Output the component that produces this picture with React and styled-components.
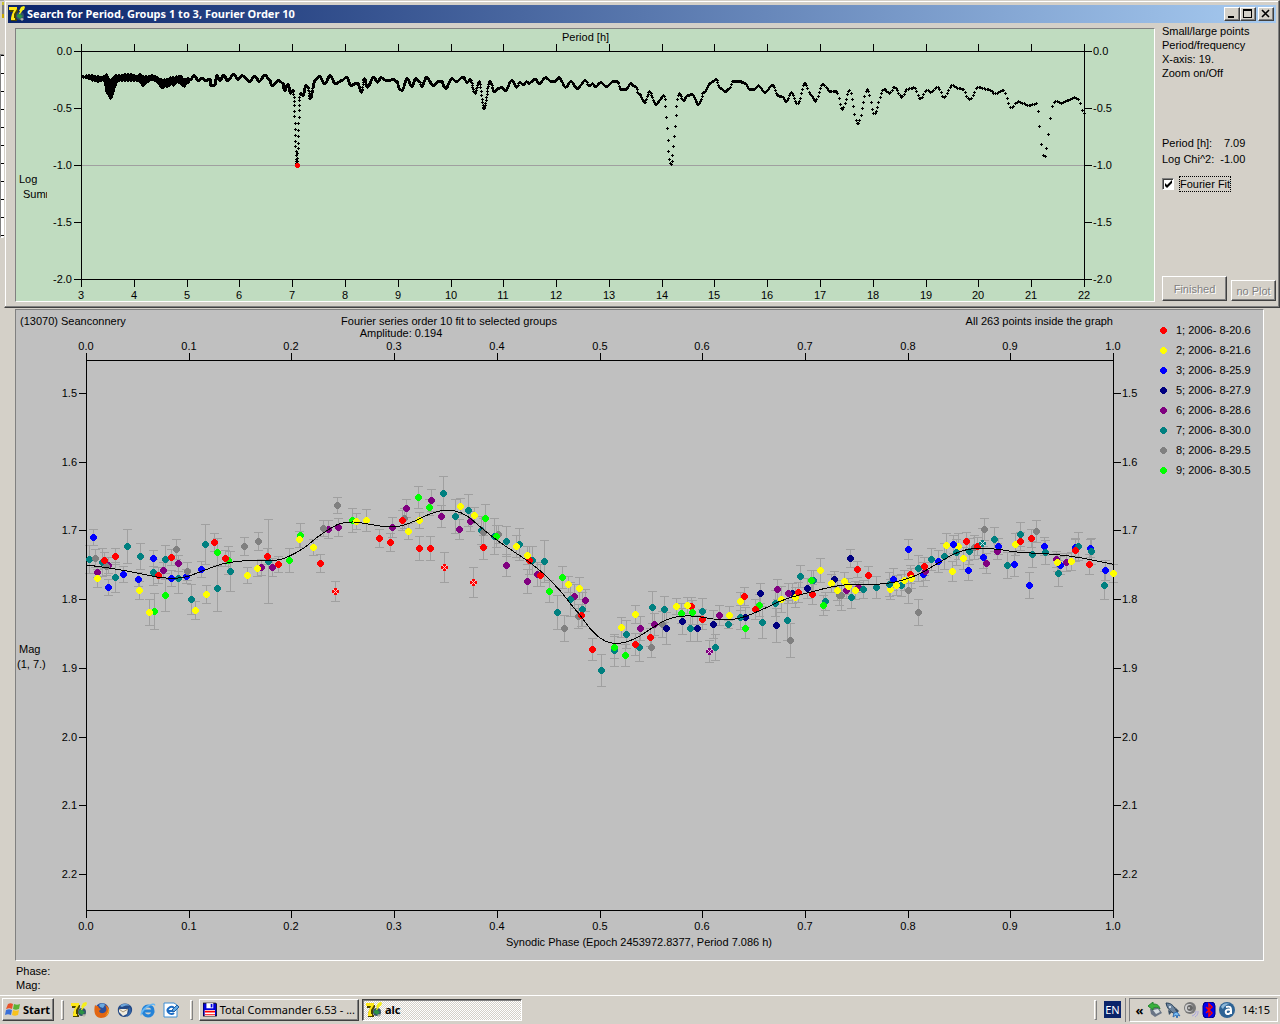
import React, { useState } from "react";
import styled, { createGlobalStyle, css } from "styled-components";

const GlobalStyle = createGlobalStyle`
  * {
    box-sizing: border-box;
  }
  body {
    margin: 0;
    background: #d4d0c8;
    color: #000;
    font-family: "Liberation Sans", Arial, sans-serif;
    font-size: 11px;
    line-height: 14px;
  }
  button,
  input {
    font: inherit;
    color: inherit;
    margin: 0;
  }
`;

const tahoma = `"Noto Sans", Tahoma, sans-serif`;

const raised = css`
  border: 1px solid;
  border-color: #fff #404040 #404040 #fff;
  box-shadow: inset -1px -1px 0 #808080;
`;

const Screen = styled.div`
  min-height: 100vh;
  display: flex;
  flex-direction: column;
`;
const TopArea = styled.div`
  display: grid;
  grid-template-columns: 4px minmax(0, 1fr);
`;
const Strip = styled.div`
  padding-top: 1px;
  border-top: 1px solid #a0a0a0;
`;
const StripIcon = styled.div`
  height: 16px;
  margin-left: 2px;
  margin-bottom: 36px;
  background: linear-gradient(#c8c030 3px, #808080 3px, #808080 12px, #c8a800 12px);
`;
const StripPlot = styled.div`
  height: 184px;
  border: 1px solid;
  border-color: #808080 transparent #fff #808080;
  background: repeating-linear-gradient(#000 0 1px, #fff 1px 18px);
`;
const Dialog = styled.section`
  border: 1px solid;
  border-color: #d4d0c8 #404040 #404040 #d4d0c8;
  box-shadow: inset -1px -1px 0 #808080, inset 1px 1px 0 #fff;
  padding: 4px 3px 5px;
`;
const TitleBar = styled.header`
  height: 18px;
  padding: 0 2px 0 1px;
  display: flex;
  align-items: center;
  color: #fff;
  background: linear-gradient(to right, #0a246a, #a6caf0);
`;
const Title = styled.h1`
  flex: 1;
  margin: 0 0 0 2px;
  font: bold 11px/16px ${tahoma};
`;
const CaptionButton = styled.button`
  width: 16px;
  height: 14px;
  padding: 0;
  margin-left: ${(p) => (p.$gap ? 2 : 0)}px;
  display: flex;
  background: #d4d0c8;
  ${raised}
`;
const DialogBody = styled.div`
  display: grid;
  grid-template-columns: minmax(0, 1fr) 114px;
  column-gap: 7px;
  padding: 5px 0 0 7px;
`;
const Sunken = styled.div`
  border: 1px solid;
  border-color: #808080 #fff #fff #808080;
  background: ${(p) => p.$color};
`;
const Chart = styled.svg`
  display: block;
  width: 100%;
  height: auto;
  font-size: 11px;
  shape-rendering: crispEdges;
`;
const Side = styled.aside`
  display: flex;
  flex-direction: column;
  margin-top: -4px;
  padding-bottom: 1px;
`;
const Options = styled.ul`
  list-style: none;
  margin: 0;
  padding: 0;
`;
const Values = styled.dl`
  display: grid;
  grid-template-columns: auto auto;
  justify-content: start;
  column-gap: 6px;
  row-gap: 2px;
  margin: 56px 0 0;
  white-space: nowrap;
  dd {
    margin: 0;
    text-align: right;
  }
`;
const CheckLabel = styled.label`
  display: flex;
  align-items: center;
  gap: 5px;
  margin-top: 10px;
`;
const CheckBox = styled.span`
  display: grid;
  > * {
    grid-area: 1 / 1;
  }
  svg {
    pointer-events: none;
  }
`;
const CheckInput = styled.input`
  appearance: none;
  width: 12px;
  height: 12px;
  background: #fff;
  border: 1px solid;
  border-color: #808080 #fff #fff #808080;
  box-shadow: inset 1px 1px 0 #404040;
`;
const CheckText = styled.span`
  border: 1px dotted #000;
`;
const Buttons = styled.div`
  display: flex;
  align-items: flex-end;
  gap: 4px;
  margin-top: auto;
`;
const PushButton = styled.button`
  width: ${(p) => p.$width}px;
  height: ${(p) => p.$height}px;
  padding: 0;
  background: #d4d0c8;
  white-space: nowrap;
  ${raised}
  &:disabled {
    color: #808080;
    text-shadow: 1px 1px 0 #fff;
  }
`;
const Main = styled.main`
  padding: 1px 16px 0 15px;
`;
const Status = styled.footer`
  padding: 3px 16px 0;
`;
const Taskbar = styled.nav`
  display: flex;
  align-items: center;
  height: 29px;
  margin-top: auto;
  padding: 0 2px 1px;
  border-top: 1px solid #fff;
  font: 11px/16px ${tahoma};
`;
const StartButton = styled.button`
  width: 52px;
  height: 23px;
  padding: 0 0 0 2px;
  display: flex;
  align-items: center;
  gap: 2px;
  font: bold 11px/16px ${tahoma};
  background: #d4d0c8;
  ${raised}
`;
const Grip = styled.span`
  width: 3px;
  height: 20px;
  margin: 0 6px 0 7px;
  border: 1px solid;
  border-color: #fff #808080 #808080 #fff;
`;
const QuickLaunch = styled.div`
  display: flex;
  gap: 7px;
  margin: 0 4px 0 1px;
`;
const IconButton = styled.button`
  width: 16px;
  height: 16px;
  padding: 0;
  border: 0;
  background: none;
  svg {
    display: block;
  }
`;
const TaskButton = styled.button`
  width: 160px;
  height: 22px;
  margin-right: 3px;
  padding: 0 3px;
  display: flex;
  align-items: center;
  gap: 3px;
  white-space: nowrap;
  background: #d4d0c8;
  ${raised}
  ${(p) =>
    p.$active &&
    css`
      font-weight: bold;
      border-color: #404040 #fff #fff #404040;
      box-shadow: inset 1px 1px 0 #808080;
      background: repeating-conic-gradient(#fff 0 25%, #d4d0c8 0 50%) 0 0 / 2px 2px;
    `}
`;
const Spacer = styled.div`
  flex: 1;
`;
const Language = styled.button`
  width: 17px;
  height: 17px;
  padding: 0;
  border: 0;
  margin-left: 1px;
  color: #fff;
  background: #0a246a;
`;
const Divider = styled.span`
  width: 1px;
  height: 24px;
  margin: 0 3px 0 4px;
  background: #808080;
`;
const Tray = styled.div`
  display: flex;
  align-items: center;
  gap: 2px;
  height: 24px;
  padding: 0 7px 0 4px;
  border: 1px solid;
  border-color: #808080 #fff #fff #808080;
`;
const Clock = styled.time`
  margin-left: 5px;
`;
const More = styled.button`
  width: 11px;
  padding: 0;
  border: 0;
  background: none;
  font: bold 13px/16px ${tahoma};
`;

const COLORS = {
  r: "#ff0000",
  y: "#ffff00",
  b: "#0000ff",
  n: "#000080",
  p: "#800080",
  t: "#008080",
  g: "#808080",
  l: "#00ff00",
};

const LEGEND = [
  ["r", "1; 2006- 8-20.6"],
  ["y", "2; 2006- 8-21.6"],
  ["b", "3; 2006- 8-25.9"],
  ["n", "5; 2006- 8-27.9"],
  ["p", "6; 2006- 8-28.6"],
  ["t", "7; 2006- 8-30.0"],
  ["g", "8; 2006- 8-29.5"],
  ["l", "9; 2006- 8-30.5"],
];

// Each segment has its own origin; offsets inside are in thirds of a unit.
const unpack = (ox, oy, text) =>
  text.split(",").map((item) => {
    const [x, y, ...rest] = item.trim().split(" ").map(Number);
    return [ox + x / 3, oy + y / 3, ...rest];
  });

// x, top, bottom of the dense short period part
const BAND = [
  [244, 228, 230], [260, 226, 234], [275, 226, 240], [290, 228, 244],
  [300, 230, 242], [312, 228, 242], [318, 222, 275], [324, 236, 285],
  [332, 240, 298], [340, 228, 270], [350, 224, 240], [365, 224, 242],
  [380, 222, 240], [395, 222, 243], [410, 228, 242], [418, 222, 245],
  [428, 228, 258], [440, 228, 245], [458, 225, 238], [470, 232, 245],
  [480, 236, 260], [487, 240, 266], [495, 236, 256], [503, 236, 262],
  [512, 230, 250], [520, 232, 256], [530, 228, 245], [541, 226, 250],
  [550, 238, 262], [558, 236, 250], [570, 232, 244],
];

// turning points of the periodogram
const TURNS = [
  ...unpack(0, 0, "570 238,583 226,595 240,605 233,618 240,630 236,633 255,643 256,651 226,660 240,671 224,683 240,701 222,714 236,727 226,748 242,765 228,778 242,795 224,808 236,816 256,836 240,848 248,854 270,864 252,872 278,880 270,891 490,901 278,909 286,918 256,925 262,931 295,945 240,958 228,975 250,990 226,1007 250,1025 240,1040 230,1053 254,1073 248,1085 276,1093 234,1102 260,1121 230,1133 245,1143 232,1160 240,1180 238,1190 242,1199 266"),
  ...unpack(400, 20, "5 210,22 174,35 198,47 174,58 182,66 198,79 170,100 196,115 184,125 184,137 204,156 174,168 184,189 170,202 186,211 178,225 218,238 184,252 264,270 184,284 214,295 204,306 200,316 210,335 180,350 200,359 186,370 192,380 184,388 188,405 176,418 188,437 172,453 182,465 182,477 172,497 200,513 182,532 204,556 180,568 196,578 190,587 198,602 186,620 198,640 184,653 184,663 206,678 206,692 190,706 198,718 222,734 246,750 214,767 252,792 226,813 432,838 220,851 240,862 226,876 222,896 252,912 216,930 188,948 178,962 204,975 214,988 206,1000 182,1018 182,1035 188,1052 208,1062 208,1076 196,1095 216,1118 194,1136 226,1146 228,1158 244,1175 216,1192 248"),
  ...unpack(780, 0, "5 286,19 304,35 278,53 308,76 248,93 285,107 302,128 252,153 274,170 272,187 328,209 270,233 370,263 268,283 340,312 266,328 278,344 260,366 290,383 266,403 262,421 296,440 270,453 276,473 260,492 290,517 254,535 264,548 266,569 298,595 260,625 268,648 280,670 270,694 322,715 304,730 310,750 316,768 310,793 472,822 306,832 302,847 308,865 300,885 292,895 298,912 340"),
];

const periodX = (period) => 81 + (period - 3) * 52.79;

const levelAt = (x) => {
  const i = TURNS.findIndex((p) => p[0] >= x);
  if (i < 1) return TURNS[i === 0 ? 0 : TURNS.length - 1][1];
  const [x0, y0] = TURNS[i - 1];
  const [x1, y1] = TURNS[i];
  const t = (x - x0) / (x1 - x0);
  return y0 + ((y1 - y0) * (1 - Math.cos(Math.PI * t))) / 2;
};

const cross = (x, y) => `M${x - 1} ${y}h3v1h-3zM${x} ${y - 1}h1v3h-1z`;

const buildPeriodogram = () => {
  let d = "";
  // trial periods are spaced evenly in frequency
  for (let f = 1 / 22; f < 1 / 5.06; f += 0.000075) {
    const x = periodX(1 / f);
    d += cross(Math.floor(x), Math.round(levelAt(x)));
  }
  for (let i = 0; i < BAND.length - 1; i++) {
    const [x0, top0, bottom0] = BAND[i];
    const [x1, top1, bottom1] = BAND[i + 1];
    for (let x = Math.ceil(x0 / 3); x < x1 / 3; x++) {
      const t = (x * 3 - x0) / (x1 - x0);
      const wave = x % 3 === 0 ? 3 : 0;
      const top = (top0 + (top1 - top0) * t + wave) / 3;
      const bottom = (bottom0 + (bottom1 - bottom0) * t - wave) / 3;
      for (let y = Math.round(top); y <= bottom; y++) d += cross(x, y);
    }
  }
  return d;
};

const PERIODOGRAM = buildPeriodogram();

const CURVE = [
  ...unpack(70, 470, "50 285,110 293,165 302,215 312,262 321,310 325,350 320,400 302,460 281,530 272,610 272,650 262,700 235,740 203"),
  ...unpack(320, 470, "30 176,60 161,100 156,150 163,190 169,235 169,280 155,325 134,370 121,405 123,440 137,480 170,530 210,580 244,630 278,675 315,720 362,760 412"),
  ...unpack(560, 560, "60 165,90 205,120 234,150 248,180 250,225 236,275 205,320 179,360 169,410 169,460 177,520 178,560 168,610 147,660 124,700 110,750 97,800 84"),
  ...unpack(820, 500, "57 257,95 253,150 254,200 250,250 240,300 221,350 192,400 163,440 149,490 145,540 149,600 157,700 163,780 173,880 193"),
];

const smoothPath = (pts) => {
  let d = `M${pts[0][0]} ${pts[0][1]}`;
  for (let i = 0; i < pts.length - 1; i++) {
    const a = pts[i - 1] || pts[i];
    const b = pts[i];
    const c = pts[i + 1];
    const e = pts[i + 2] || c;
    d += `C${b[0] + (c[0] - a[0]) / 6} ${b[1] + (c[1] - a[1]) / 6} ${c[0] - (e[0] - b[0]) / 6} ${c[1] - (e[1] - b[1]) / 6} ${c[0]} ${c[1]}`;
  }
  return d;
};

// group, x, y, error bar, x = rejected
const unpackPoints = (ox, oy, text) =>
  text.split(",").map((item) => {
    const [group, x, y, err, flag] = item.trim().split(" ");
    return {
      group,
      x: Math.floor(ox + x / 3),
      y: Math.floor(oy + y / 3),
      err: Math.round(err / 3),
      rejected: flag === "x",
    };
  });

const POINTS = [
  ...unpackPoints(70, 470, "b 70 202 24,t 58 268 42,g 76 265 28,t 97 278 42,p 116 287 24,g 110 288 28,r 103 272 24,p 82 308 15,y 82 326 26,r 136 260 24,b 115 352 24,t 136 322 45,t 172 230 51,b 160 314 24,t 211 260 40,b 205 328 20,y 208 362 26,l 253 425 54,y 238 428 39,b 250 265 24,t 250 308 38,r 265 316 24,p 281 301 24,t 286 268 42,l 286 377 48,b 304 326 24,r 304 263 24,t 325 326 45,g 319 238 30,p 325 281 24,b 348 318 20,g 352 304 28,t 364 388 45,y 376 422 26,b 394 299 24,t 406 224 60,y 409 374 27,r 433 217 27,l 442 248 42,t 442 356 68,l 476 271 42,r 466 265 24,t 481 304 60,g 523 230 28,y 532 317 24,p 574 293 24,y 562 296 24,g 565 214 27,t 595 275 126,r 592 260 24,p 607 293 27,r 625 284 24,l 658 271 36,l 691 197 37,y 688 209 24,y 730 233 24,r 751 281 27,p 775 178 27,g 760 176 24"),
  ...unpackPoints(320, 470, "r 46 365 30 x,g 52 107 24,p 55 173 27,l 97 152 36,y 109 155 24,y 139 152 33,r 178 206 27,r 211 217 27,p 217 173 30,g 253 146 30,r 247 152 30,p 260 115 27,y 265 185 24,l 295 83 32,y 298 152 24,r 298 236 36,r 331 236 36,p 334 92 33,l 328 113 24,p 364 140 33,t 370 71 51,r 373 293 45 x,t 406 140 51,p 418 179 30,y 421 110 24,t 445 122 48,p 452 155 30,y 463 137 24,r 460 338 45 x,l 496 146 42,t 484 182 42,g 490 186 42,r 490 233 36,t 523 200 54,g 536 192 27,l 529 199 33,t 559 215 45,p 559 287 33,t 598 224 48,y 589 230 33,t 638 272 42,r 628 272 42,y 622 257 27,p 622 335 36,t 673 275 63,p 653 314 36,r 661 317 32,l 688 365 33,t 712 428 51,l 727 323 33,y 745 344 24,g 733 476 39,p 763 380 36,t 752 388 51"),
  ...unpackPoints(560, 560, "p 76 122 33,y 58 86 33,g 55 170 36,t 67 149 50,r 65 167 33,r 97 269 33,t 124 332 48,t 163 272 48,l 163 263 33,y 184 203 30,t 199 224 42,l 196 287 33,y 226 164 27,t 238 262 42,r 226 254 33,p 241 206 36,r 271 233 27,g 274 262 30,t 277 143 48,p 283 193 33,g 307 194 39,t 313 149 40,n 319 206 48,y 349 140 24,l 364 160 30,n 367 184 39,r 395 140 27,y 382 137 24,l 397 158 36,t 391 206 39,n 412 206 39,t 427 155 39,r 427 179 30,p 448 275 33 x,t 466 263 39,n 460 194 42,p 478 167 30,y 508 167 27,t 505 193 12,y 541 125 27,r 553 110 27,n 555 171 30,t 541 173 36,l 556 206 30,l 599 137 33,r 586 149 30,n 601 100 30,t 607 188 48,t 646 130 38,n 649 197 51,p 652 88 30,y 664 118 39,t 682 182 60,n 697 101 30,p 685 100 30,y 706 113 30,g 691 242 50,r 715 98 30,t 721 50 33,n 742 86 30,t 761 62 30,l 755 62 30,r 757 104 30,y 781 32 36,t 797 125 28,l 790 137 30,n 823 57 24,y 814 71 27,g 838 106 30,y 832 92 30"),
  ...unpackPoints(820, 500, "g 64 287 45,y 73 245 27,p 79 272 24,y 85 260 24,n 91 176 27,t 94 293 33,r 112 209 24,p 115 262 15,y 106 272 26,t 130 269 27,r 145 227 27,t 169 263 33,y 211 269 30,t 208 254 36,b 220 239 33,t 245 257 33,y 229 257 30,b 265 149 30,g 265 272 39,y 253 242 30,r 271 224 27,y 275 236 30,b 310 224 36,p 316 214 27,t 295 206 38,r 313 200 27,g 295 338 39,t 334 179 33,b 355 185 33,t 373 170 39,y 379 137 36,y 397 215 30,y 415 140 39,b 400 134 28,t 409 158 40,y 430 176 33,b 445 212 30,t 448 155 39,r 439 125 27,g 463 143 36,r 472 140 27,t 487 131 45 x,g 493 89 33,b 490 173 33,p 499 191 30,t 523 119 36,p 532 155 24,b 535 140 24,t 562 197 38,b 583 194 36,y 586 134 33,t 601 104 36,r 601 125 27,b 628 257 39,r 634 116 27,t 637 164 39,g 649 95 33,b 673 140 28,t 676 158 37,p 709 179 24,b 722 197 27,y 712 188 27,t 715 221 39,p 739 188 27,y 754 185 27,b 766 143 28,t 775 140 42,r 766 152 33,r 808 194 30,b 811 146 28,t 814 155 39,t 853 257 41,b 856 212 30,y 880 221 27"),
];

const dotPath = (x, y) =>
  `M${x - 1} ${y - 3}h3v1h1v1h1v3h-1v1h-1v1h-3v-1h-1v-1h-1v-3h1v-1h1z`;

const Dot = ({ x, y, group, rejected }) => (
  <g>
    <path d={dotPath(x, y)} fill={COLORS[group]} />
    {rejected && (
      <path
        d={`M${x - 2} ${y - 2}h1v1h1v1h1v-1h1v-1h1v1h-1v1h-1v1h1v1h1v1h-1v-1h-1v-1h-1v1h-1v1h-1v-1h1v-1h1v-1h-1v-1h-1z`}
        fill="#fff"
        fillOpacity="0.8"
      />
    )}
  </g>
);

const PeriodChart = () => (
  <Chart viewBox="16 29 1138 272" role="img" aria-label="Periodogram">
    <text x="562" y="41">Period [h]</text>
    <path d="M81 165h1003v1h-1003z" fill="#a0a0a0" />
    <path d="M81 51h1004v1h-1004zM81 279h1004v1h-1004zM81 51h1v228h-1zM1084 51h1v228h-1z" />
    {Array.from({ length: 20 }, (_, i) => {
      const x = Math.round(81 + i * 52.79);
      return (
        <g key={i}>
          <path d={`M${x} 44h1v8h-1zM${x} 280h1v7h-1z`} />
          <text x={x} y="299" textAnchor="middle">
            {i + 3}
          </text>
        </g>
      );
    })}
    {["0.0", "-0.5", "-1.0", "-1.5", "-2.0"].map((label, i) => (
      <g key={label}>
        <path d={`M74 ${51 + i * 57}h7v1h-7zM1085 ${51 + i * 57}h7v1h-7z`} />
        <text x="72" y={55 + i * 57} textAnchor="end">
          {label}
        </text>
        <text x="1093" y={55 + i * 57}>
          {label}
        </text>
      </g>
    ))}
    <text x="19" y="183">Log</text>
    <clipPath id="sum-clip">
      <rect x="19" y="184" width="28" height="18" />
    </clipPath>
    <text x="23" y="198" clipPath="url(#sum-clip)">
      Summ
    </text>
    <path d={PERIODOGRAM} />
    <path d="M296 163h3v1h1v3h-1v1h-3v-1h-1v-3h1z" fill="#f00" />
  </Chart>
);

const PhaseChart = () => (
  <Chart viewBox="16 310 1247 650" role="img" aria-label="Phased light curve">
    <text x="20" y="325">(13070) Seanconnery</text>
    <text x="449" y="325" textAnchor="middle">
      Fourier series order 10 fit to selected groups
    </text>
    <text x="401" y="337" textAnchor="middle">
      Amplitude: 0.194
    </text>
    <text x="1113" y="325" textAnchor="end">
      All 263 points inside the graph
    </text>
    <text x="639" y="946" textAnchor="middle">
      Synodic Phase (Epoch 2453972.8377, Period 7.086 h)
    </text>
    <text x="19" y="653">Mag</text>
    <text x="17" y="668">(1, 7.)</text>
    {Array.from({ length: 11 }, (_, i) => {
      const x = Math.round(86 + i * 102.7);
      const label = (i / 10).toFixed(1);
      return (
        <g key={i}>
          <path d={`M${x} 353h1v8h-1zM${x} 910h1v8h-1z`} />
          <text x={x} y="350" textAnchor="middle">
            {label}
          </text>
          <text x={x} y="930" textAnchor="middle">
            {label}
          </text>
        </g>
      );
    })}
    {Array.from({ length: 8 }, (_, i) => {
      const y = Math.round(393 + i * 68.7);
      const label = (1.5 + i / 10).toFixed(1);
      return (
        <g key={i}>
          <path d={`M79 ${y}h7v1h-7zM1114 ${y}h7v1h-7z`} />
          <text x="77" y={y + 4} textAnchor="end">
            {label}
          </text>
          <text x="1122" y={y + 4}>
            {label}
          </text>
        </g>
      );
    })}
    {POINTS.map((p, i) => (
      <path
        key={i}
        fill="#a0a0a0"
        d={`M${p.x} ${p.y - p.err}h1v${p.err * 2}h-1zM${p.x - 4} ${p.y - p.err}h9v1h-9zM${p.x - 4} ${p.y + p.err}h9v1h-9z`}
      />
    ))}
    <path d="M86 360h1028v1h-1028zM86 910h1028v1h-1028zM86 360h1v550h-1zM1113 360h1v550h-1z" />
    {POINTS.map((p, i) => (
      <Dot key={i} {...p} />
    ))}
    <path d={smoothPath(CURVE)} fill="none" stroke="#000" strokeWidth="1" />
    {LEGEND.map(([group, label], i) => (
      <g key={group}>
        <Dot group={group} x={1163} y={330 + i * 20} />
        <text x="1176" y={334 + i * 20}>
          {label}
        </text>
      </g>
    ))}
  </Chart>
);

const AppIcon = () => (
  <svg width="16" height="16" viewBox="0 0 16 16" aria-hidden="true">
    <path d="M1 3h8v2L7 9v4h1v2H2v-3l1-3 2-3H1z" fill="#4a4400" />
    <path d="M0 1h8v2L5 8v4h1v2H2v-2l1-4 2-4H0z" fill="#ffe818" />
    <circle cx="11" cy="10" r="4" fill="#33506b" />
    <path d="m8 9 3-2 1 2 2 1-3 3-1-1-2-1z" fill="#2b9444" />
    <path d="m15 0 1 1-1 3h-1l-3 4h-1l1-3h-1l2-4z" fill="#f5ef1a" />
    <path d="m11 13 2-1 2 1-2 2z" fill="#b4b4a4" />
  </svg>
);

const StartIcon = () => (
  <svg width="16" height="16" viewBox="0 0 16 16" aria-hidden="true">
    <path d="M3 2c2-1 3-1 5 0L7 7C5 6 4 6 1 7z" fill="#e8532a" />
    <path d="M9 2c2 1 4 1 6 0l-1 5c-3 1-4 1-6 0z" fill="#5cb233" />
    <path d="M1 8c2-1 4-1 6 0l-1 5c-2-1-4-1-6 0z" fill="#3a70d8" />
    <path d="M8 8c2 1 4 1 6 0l-1 5c-3 1-4 1-6 0z" fill="#f8c21c" />
  </svg>
);

const FirefoxIcon = () => (
  <svg width="16" height="16" viewBox="0 0 16 16" aria-hidden="true">
    <circle cx="8" cy="8" r="7" fill="#2b4f9c" />
    <path d="M5 3c2-2 5-2 6 0l-2 3-3-1z" fill="#69a9df" />
    <path d="M1 3c1 1 2 1 3 1 1 2 1 2 3 3L5 9c1 3 5 3 7 0 1-2 0-4-1-6 3 1 5 4 4 7-1 4-4 6-8 6-5 0-8-5-6-13z" fill="#e26612" />
    <path d="M13 5c2 3 1 7-2 9 4-1 5-6 2-9z" fill="#fbc531" />
  </svg>
);

const ThunderbirdIcon = () => (
  <svg width="16" height="16" viewBox="0 0 16 16" aria-hidden="true">
    <path d="M1 6C3 0 13 0 15 6c1 5-3 9-8 9-4 0-7-4-6-9z" fill="#244a87" />
    <path d="M3 4c3-3 7-3 10 0-3-1-6 0-8 1z" fill="#6fa7dc" />
    <path d="m2 7 5 0 4 0-1 5-4 2-4-4z" fill="#f0ece0" />
    <path d="m2 7 4 3 5-3" fill="none" stroke="#a69478" />
    <path d="M12 6c2 2 1 6-2 8" fill="none" stroke="#3266aa" strokeWidth="2" />
  </svg>
);

const ExplorerIcon = () => (
  <svg width="16" height="16" viewBox="0 0 16 16" aria-hidden="true">
    <path d="M13 10c-1 3-3 4-5 4-7-1-6-10 0-10 4 0 5 2 5 5H4" fill="none" stroke="#2583d8" strokeWidth="3" />
    <path d="M1 14c-2-3 3-10 10-12 3-1 5 0 4 2-1-2-4-1-7 1-4 3-6 6-7 9z" fill="#66b7f4" />
  </svg>
);

const OutlookIcon = () => (
  <svg width="16" height="16" viewBox="0 0 16 16" aria-hidden="true">
    <path d="M1 1h10l3 2v12H1z" fill="#fff" stroke="#3e8fd5" />
    <path d="M11 6c-3-3-8 1-6 4 2 3 5 2 6 1M5 9h5" fill="none" stroke="#1c6cc4" strokeWidth="2" />
    <path d="m9 8 5-5 2 2-5 5z" fill="#60a9e5" stroke="#255f9f" />
  </svg>
);

const FloppyIcon = () => (
  <svg width="16" height="16" viewBox="0 0 16 16" aria-hidden="true">
    <path d="M0 0h15l1 1v14H0z" fill="#0000d8" stroke="#000" />
    <path d="M4 0h8v6H4z" fill="#fff" />
    <path d="M9 1h2v4H9z" fill="#0000d8" />
    <path d="M2 8h12v7H2z" fill="#fff" />
    <path d="M2 9h12v2H2zM2 13h12v1H2z" fill="#f00" />
  </svg>
);

const DeviceIcon = () => (
  <svg width="16" height="16" viewBox="0 0 16 16" aria-hidden="true">
    <path d="m3 7 8-2 4 6-7 4-4-3z" fill="#697485" />
    <path d="m6 8 5-1 2 3-4 2z" fill="#d5dcdf" />
    <path d="M1 4 6 0v2c4 0 6 1 7 5-2-2-4-2-7-1v2z" fill="#38b13d" stroke="#258532" />
  </svg>
);

const RocketIcon = () => (
  <svg width="16" height="16" viewBox="0 0 16 16" aria-hidden="true">
    <path d="M1 1c5 0 7 2 10 7l2 5-5-2C4 8 2 6 1 1z" fill="#6d849d" stroke="#253f5a" />
    <path d="m3 8 4 2-3 3zM10 5l4 4-2 2z" fill="#384d63" />
    <path d="m9 11 3-1 3 4-2-1-1 3-1-3-3 2z" fill="#79bff5" stroke="#3470b4" />
    <circle cx="5" cy="5" r="1" fill="#e8f4ff" />
  </svg>
);

const SpeakerIcon = () => (
  <svg width="16" height="16" viewBox="0 0 16 16" aria-hidden="true">
    <circle cx="7" cy="6" r="6" fill="#777" />
    <circle cx="6" cy="6" r="4" fill="#d0d0d0" />
    <circle cx="7" cy="6" r="3" fill="#666" />
    <circle cx="6" cy="6" r="1" fill="#ccc" />
    <path d="M9 14c3-1 4-3 4-5M12 15c3-2 3-4 3-6" fill="none" stroke="#a6a3df" />
  </svg>
);

const BluetoothIcon = () => (
  <svg width="16" height="16" viewBox="0 0 16 16" aria-hidden="true">
    <rect x="2" y="0" width="12" height="16" rx="4" fill="#0000f0" stroke="#000080" />
    <path d="m5 5 6 6-3 3V2l3 3-6 6" fill="none" stroke="#f00" strokeWidth="1.4" />
  </svg>
);

const AvastIcon = () => (
  <svg width="16" height="16" viewBox="0 0 16 16" aria-hidden="true">
    <circle cx="8" cy="8" r="8" fill="#2d6395" />
    <path d="M2 5c1-3 5-5 9-3-3 0-6 2-7 5z" fill="#8db8da" />
    <path d="M7 5c4-1 5 0 5 3v4M12 8c-4-1-6 0-5 3 1 2 4 1 5-1" fill="none" stroke="#fff" strokeWidth="2" />
  </svg>
);

const App = () => {
  const [fit, setFit] = useState(true);

  return (
    <Screen>
      <GlobalStyle />
      <TopArea>
        <Strip>
          <StripIcon />
          <StripPlot />
        </Strip>
        <Dialog>
          <TitleBar>
            <AppIcon />
            <Title>Search for Period, Groups 1 to 3, Fourier Order 10</Title>
            <CaptionButton aria-label="Minimize">
              <svg width="14" height="12" viewBox="0 0 14 12">
                <path d="M3 8h6v2H3z" />
              </svg>
            </CaptionButton>
            <CaptionButton aria-label="Maximize">
              <svg width="14" height="12" viewBox="0 0 14 12">
                <path d="M2 1h9v9H2zM3 3v6h7V3z" fillRule="evenodd" />
              </svg>
            </CaptionButton>
            <CaptionButton aria-label="Close" $gap>
              <svg width="14" height="12" viewBox="0 0 14 12">
                <path d="m3 2 7 7m0-7L3 9" stroke="#000" strokeWidth="1.6" />
              </svg>
            </CaptionButton>
          </TitleBar>
          <DialogBody>
            <Sunken $color="#c0dcc0">
              <PeriodChart />
            </Sunken>
            <Side>
              <Options>
                <li>Small/large points</li>
                <li>Period/frequency</li>
                <li>X-axis: 19.</li>
                <li>Zoom on/Off</li>
              </Options>
              <Values>
                <dt>Period [h]:</dt>
                <dd>7.09</dd>
                <dt>Log Chi^2:</dt>
                <dd>-1.00</dd>
              </Values>
              <CheckLabel>
                <CheckBox>
                  <CheckInput
                    type="checkbox"
                    checked={fit}
                    onChange={(e) => setFit(e.target.checked)}
                  />
                  {fit && (
                    <svg width="12" height="12" viewBox="0 0 12 12">
                      <path d="M3 5v3l2 2 5-5V2L5 7z" />
                    </svg>
                  )}
                </CheckBox>
                <CheckText>Fourier Fit</CheckText>
              </CheckLabel>
              <Buttons>
                <PushButton $width={65} $height={25} disabled>
                  Finished
                </PushButton>
                <PushButton $width={45} $height={21} disabled>
                  no Plot
                </PushButton>
              </Buttons>
            </Side>
          </DialogBody>
        </Dialog>
      </TopArea>
      <Main>
        <Sunken $color="#c0c0c0">
          <PhaseChart />
        </Sunken>
      </Main>
      <Status>
        <div>Phase:</div>
        <div>Mag:</div>
      </Status>
      <Taskbar>
        <StartButton>
          <StartIcon />
          Start
        </StartButton>
        <Grip />
        <QuickLaunch>
          <IconButton aria-label="alc">
            <AppIcon />
          </IconButton>
          <IconButton aria-label="Firefox">
            <FirefoxIcon />
          </IconButton>
          <IconButton aria-label="Thunderbird">
            <ThunderbirdIcon />
          </IconButton>
          <IconButton aria-label="Internet Explorer">
            <ExplorerIcon />
          </IconButton>
          <IconButton aria-label="Outlook Express">
            <OutlookIcon />
          </IconButton>
        </QuickLaunch>
        <Grip />
        <TaskButton>
          <FloppyIcon />
          Total Commander 6.53 - ...
        </TaskButton>
        <TaskButton $active>
          <AppIcon />
          alc
        </TaskButton>
        <Spacer />
        <Grip />
        <Language>EN</Language>
        <Divider />
        <Tray>
          <More aria-label="Show hidden icons">«</More>
          <DeviceIcon />
          <RocketIcon />
          <SpeakerIcon />
          <BluetoothIcon />
          <AvastIcon />
          <Clock>14:15</Clock>
        </Tray>
      </Taskbar>
    </Screen>
  );
};

export default App;
